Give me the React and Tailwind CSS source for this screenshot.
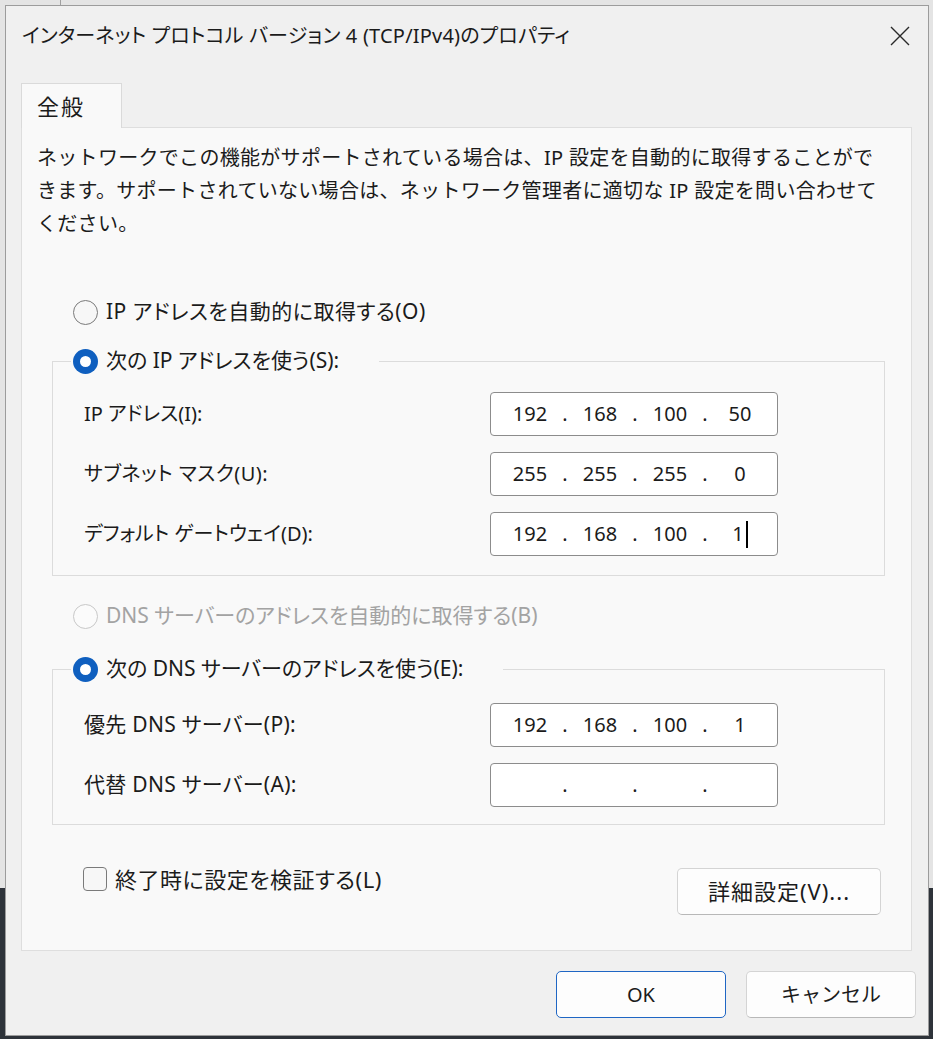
import React from "react";

const FONT = "[font-family:'Noto_Sans','Noto_Sans_CJK_JP',sans-serif]";
const PALT = "[font-feature-settings:'palt']";

function Radio({ state }) {
  if (state === "checked") {
    return (
      <span className="w-[25px] h-[25px] rounded-full bg-[#0f5fbf] flex items-center justify-center shrink-0">
        <span className="w-[11px] h-[11px] rounded-full bg-white" />
      </span>
    );
  }
  if (state === "disabled") {
    return <span className="w-[25px] h-[25px] rounded-full border-[1.5px] border-[#c8c8c8] bg-[#fbfbfb] shrink-0" />;
  }
  return <span className="w-[25px] h-[25px] rounded-full border-[1.5px] border-[#7a7a7a] bg-[#f7f7f7] shrink-0" />;
}

function IpField({ octets, cursor }) {
  const cells = [];
  octets.forEach((o, i) => {
    cells.push(
      <span key={"o" + i} className="w-[60px] flex items-center justify-center">
        {o}
        {cursor && i === 3 ? <span className="inline-block w-[2px] h-[27px] bg-black ml-[2px]" /> : null}
      </span>
    );
    if (i < 3) {
      cells.push(
        <span key={"d" + i} className="w-[10px] flex items-center justify-center">
          .
        </span>
      );
    }
  });
  return (
    <div className="w-[288px] h-[44px] bg-white border-[1.5px] border-[#8c8c8c] rounded-[4px] flex items-center pl-[9px] text-[20px] text-[#1b1b1b]">
      {cells}
    </div>
  );
}

function Row({ label, octets, cursor, size }) {
  return (
    <div className="flex items-center h-[44px]">
      <span className={"w-[406px] text-[#1b1b1b] whitespace-nowrap " + PALT + " " + (size || "text-[20px]")}>{label}</span>
      <IpField octets={octets} cursor={cursor} />
    </div>
  );
}

export default function App() {
  return (
    <div
      className={
        "w-[933px] h-[1039px] overflow-hidden bg-[linear-gradient(to_bottom,#e4e4e4_0px,#e4e4e4_888px,#2e333a_888px)] " +
        FONT
      }
    >
      <div className="h-[5px] flex">
        <div className="w-[60px]" />
        <div className="w-px bg-[#a0a0a0]" />
      </div>
      <div className="ml-[5px] w-[924px] h-[1031px] bg-[#f0f0f0] border border-[#9c9c9c] flex flex-col">
        {/* title bar */}
        <div className="h-[60px] shrink-0 flex items-center justify-between pl-[16px] pr-[18px]">
          <span className={"text-[20px] tracking-[0.2px] text-[#1b1b1b] whitespace-nowrap " + PALT}>
            インターネット プロトコル バージョン 4 (TCP/IPv4)のプロパティ
          </span>
          <svg width="20" height="20" viewBox="0 0 20 20" className="shrink-0">
            <path d="M1 1 L19 19 M19 1 L1 19" stroke="#2a2a2a" strokeWidth="1.4" fill="none" />
          </svg>
        </div>

        {/* tab */}
        <div className="mt-[17px] ml-[15px] w-[101px] h-[45px] -mb-px relative z-10 bg-[#f9f9f9] border border-b-0 border-[#dadada] flex items-center pl-[15px]">
          <span className="text-[22px] tracking-[2px] text-[#1b1b1b]">全般</span>
        </div>

        {/* panel */}
        <div className="ml-[15px] w-[891px] h-[824px] bg-[#f9f9f9] border border-[#dedede] flex flex-col">
          <div className="ml-[15px] pt-[13px] text-[20px] leading-[33px] tracking-[0.3px] text-[#1b1b1b] whitespace-nowrap">
            <div>ネットワークでこの機能がサポートされている場合は、IP 設定を自動的に取得することがで</div>
            <div>きます。サポートされていない場合は、ネットワーク管理者に適切な IP 設定を問い合わせて</div>
            <div>ください。</div>
          </div>

          <div className="mt-[55px] ml-[51px] h-[34px] flex items-center gap-[8px]">
            <Radio state="unchecked" />
            <span className={"text-[21px] tracking-[0.5px] text-[#1b1b1b] whitespace-nowrap " + PALT}>IP アドレスを自動的に取得する(O)</span>
          </div>

          <fieldset className="mt-[15px] ml-[30px] w-[833px] border border-[#dcdcdc] pl-[31px] pt-[14px] pb-[19px]">
            <legend className="ml-[-13px] pl-[2px] pr-[40px]">
              <span className="h-[34px] flex items-center gap-[8px]">
                <Radio state="checked" />
                <span className={"text-[21px] text-[#1b1b1b] whitespace-nowrap " + PALT}>次の IP アドレスを使う(S):</span>
              </span>
            </legend>
            <div className="flex flex-col gap-[16px]">
              <Row label="IP アドレス(I):" octets={["192", "168", "100", "50"]} />
              <Row label="サブネット マスク(U):" octets={["255", "255", "255", "0"]} size="text-[20px] tracking-[0.5px]" />
              <Row label="デフォルト ゲートウェイ(D):" octets={["192", "168", "100", "1"]} cursor />
            </div>
          </fieldset>

          <div className="mt-[23px] ml-[51px] h-[34px] flex items-center gap-[8px]">
            <Radio state="disabled" />
            <span className={"text-[21px] text-[#a3a3a3] whitespace-nowrap " + PALT}>DNS サーバーのアドレスを自動的に取得する(B)</span>
          </div>

          <fieldset className="mt-[19px] ml-[30px] w-[833px] border border-[#dcdcdc] pl-[31px] pt-[17px] pb-[17px]">
            <legend className="ml-[-13px] pl-[2px] pr-[40px]">
              <span className="h-[34px] flex items-center gap-[8px]">
                <Radio state="checked" />
                <span className={"text-[21px] text-[#1b1b1b] whitespace-nowrap " + PALT}>次の DNS サーバーのアドレスを使う(E):</span>
              </span>
            </legend>
            <div className="flex flex-col gap-[16px]">
              <Row label="優先 DNS サーバー(P):" octets={["192", "168", "100", "1"]} size="text-[21px] tracking-[0.3px]" />
              <Row label="代替 DNS サーバー(A):" octets={["", "", "", ""]} size="text-[21px] tracking-[0.3px]" />
            </div>
          </fieldset>

          <div className="mt-[37px] flex items-start justify-between">
            <div className="ml-[61px] h-[34px] flex items-center gap-[8px]">
              <span className="w-[24px] h-[24px] rounded-[4px] border-[1.5px] border-[#7a7a7a] bg-[#f7f7f7] shrink-0" />
              <span className={"text-[22px] tracking-[0.5px] text-[#1b1b1b] whitespace-nowrap " + PALT}>終了時に設定を検証する(L)</span>
            </div>
            <div className="mt-[6px] mr-[30px] w-[204px] h-[47px] rounded-[5px] bg-[#fdfdfd] border border-[#d4d4d4] border-b-[#b8b8b8] flex items-center justify-center text-[22px] tracking-[1px] text-[#1b1b1b] whitespace-nowrap">
              詳細設定(V)...
            </div>
          </div>
        </div>

        {/* bottom buttons */}
        <div className="mt-[20px] flex justify-end gap-[20px] pr-[12px]">
          <div className="w-[170px] h-[47px] rounded-[5px] bg-[#fdfdfd] border-[1.5px] border-[#1f66c4] flex items-center justify-center text-[20px] text-[#1b1b1b]">
            OK
          </div>
          <div className="w-[170px] h-[47px] rounded-[5px] bg-[#fdfdfd] border border-[#d4d4d4] border-b-[#b8b8b8] flex items-center justify-center text-[20px] text-[#1b1b1b]">
            キャンセル
          </div>
        </div>
      </div>
    </div>
  );
}
